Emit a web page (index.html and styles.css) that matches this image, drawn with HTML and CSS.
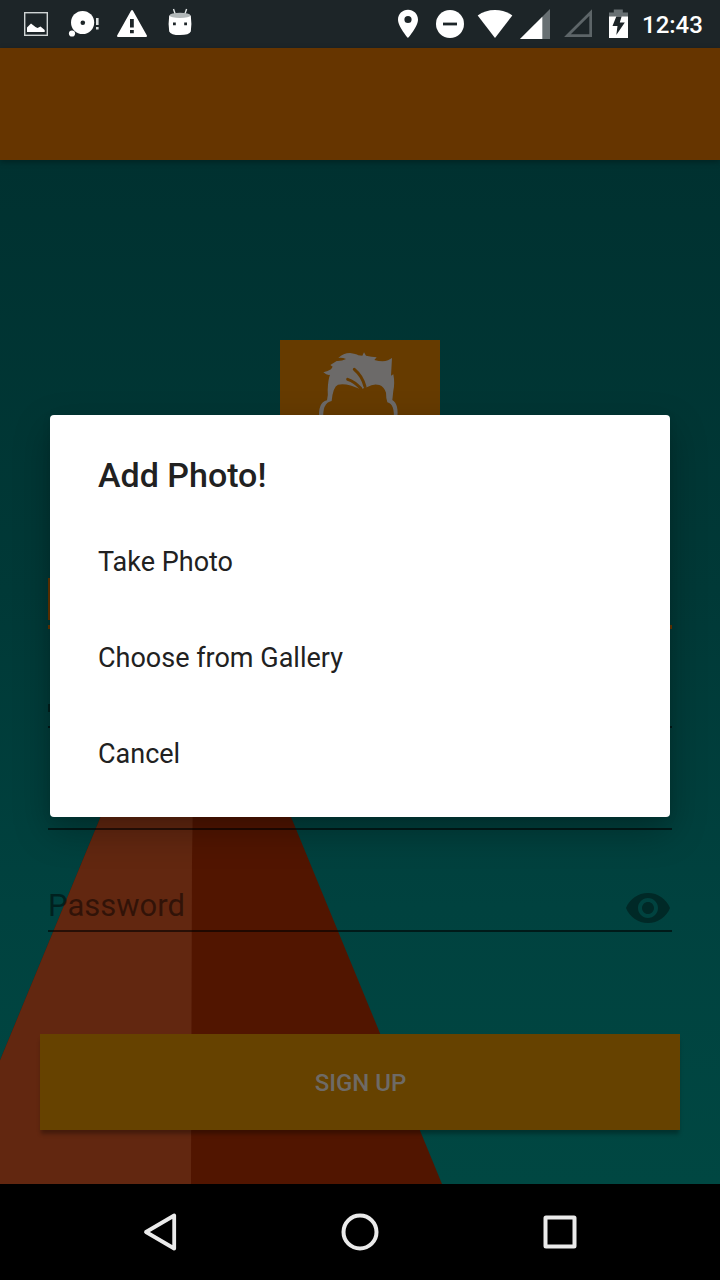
FILE: index.html
```html
<!DOCTYPE html>
<html lang="en">
<head>
<meta charset="utf-8">
<title>Add Photo</title>
<link rel="stylesheet" href="styles.css">
</head>
<body>
<div class="phone">
  <header class="status">
    <div class="notifications">
      <svg width="48" height="48" viewBox="12 0 48 48"><rect x="24.7" y="12.7" width="22.6" height="22.6" fill="none" stroke="#cfd4d4" stroke-width="1.4"/><path d="M27 32v-4.500l4-4 4.500 3.500 2 1 3-1.500 4.200 3.500v2z" fill="#fff"/></svg>
      <svg width="48" height="48" viewBox="60 0 48 48"><circle cx="82.6" cy="22.5" r="11.6" fill="#fff"/><circle cx="82.8" cy="22.7" r="2.3" fill="#1d2528"/><circle cx="72" cy="33.5" r="3.1" fill="#fff"/><path d="M96 18h2.600v7H96zM96 27h2.600v2.600H96z" fill="#dde1e1"/></svg>
      <svg width="48" height="48" viewBox="108 0 48 48"><path d="M132 11L118 36h28z" fill="#fff" stroke="#fff" stroke-width="2" stroke-linejoin="round"/><path d="M130 19h3.800v8.500H130zM130 30h3.800v3.200H130z" fill="#1d2528"/></svg>
      <svg width="48" height="48" viewBox="156 0 48 48"><path d="M173.500 9l1.700 5M186.600 9l-1.700 5" stroke="#e2e6e6" stroke-width="1.400"/><path d="M169.200 15.500h21.600q1.200 9 0 16-1.500 3.600-10.800 3.600t-10.800-3.600q-1.200-7 0-16z" fill="#fff"/><ellipse cx="180" cy="15.400" rx="10.400" ry="2.600" fill="#b2b8b9"/><path d="M173 22.500h2.800v2.800H173zM184.200 22.500h2.800v2.800h-2.800z" fill="#1d2528"/></svg>
    </div>
    <div class="system">
      <svg width="20" height="48" viewBox="398 0 20 48"><path d="M408 9.800c-5.600 0-10 4.300-10 9.700 0 7.400 10 18.500 10 18.500s10-11.100 10-18.500c0-5.400-4.400-9.700-10-9.700zm0 13.300a3.600 3.600 0 1 1 0-7.200 3.600 3.600 0 0 1 0 7.200z" fill="#fff"/></svg>
      <svg class="dnd" width="28" height="48" viewBox="436 0 28 48"><circle cx="450" cy="24" r="14" fill="#fff"/><path d="M443 22.600h14v2.800h-14z" fill="#1d2528"/></svg>
      <svg class="wifi" width="36" height="48" viewBox="477 0 36 48"><path d="M495 38L477.700 15.500Q485 10 495 10t17.300 5.500z" fill="#fff"/></svg>
      <svg class="signal" width="30" height="48" viewBox="520 0 30 48"><path d="M520 39l30-30v30z" fill="#687073"/><path d="M520 39l22.300-22.300V39z" fill="#fff"/></svg>
      <svg class="signal-empty" width="28" height="48" viewBox="564 0 28 48"><path d="M567.500 35.600L590.700 12.500v23.100z" fill="none" stroke="#5d6568" stroke-width="2.800"/></svg>
      <svg class="battery" width="19" height="48" viewBox="609 0 19 48"><path d="M609 12.500h4.800V9.500h9v3h5.200v5h-19z" fill="#687073"/><path d="M609 16.500h19V38h-19z" fill="#fff"/><path d="M616.300 16.500h5.300l-1.800 6h5l-8.500 12.500 1.200-9h-5z" fill="#1d2528"/></svg>
      <span class="clock">12:43</span>
    </div>
  </header>
  <div class="appbar"></div>
  <main class="page">
    <svg class="mountain" width="720" height="1024" viewBox="0 160 720 1024">
      <path d="M196 586L442 1184H-51z" fill="#511500"/>
      <path d="M196 586L-51 1184h242l1-320z" fill="#622710"/>
    </svg>
    <svg class="avatar" width="160" height="160" viewBox="60 60 480 480">
      <path d="M60 60h480v480H60z" fill="#663b00"/>
      <path d="M178 300Q172 248 201 241Q205 225 203 210Q204 180 210 164Q202 167 190 157Q204 154 213 148L218 140L211 135L230 123Q245 124 258 117Q246 112 235 114Q250 99 270 99Q288 101 295 106L307 107L312 97L318 107Q335 110 350 112L343 120Q368 127 384 121L396 114L393 167L400 163Q405 190 400 212L397 240Q418 252 411 300H401Q405 252 382 247Q378 236 378 218Q372 200 358 195Q340 190 322 201L302 208Q260 188 234 194Q219 200 215 243Q186 248 190 300z" fill="#6c6a69"/>
      <path d="M283 148Q307 168 315 200M263 178Q284 185 302 205" fill="none" stroke="#663b00" stroke-width="9" stroke-linecap="round"/>
    </svg>
    <form class="form">
      <div class="field active"><i class="cursor"></i></div>
      <div class="field second"><i class="stroke"></i></div>
      <div class="field"></div>
      <div class="field password">
        <span>Password</span>
        <svg width="48" height="48" viewBox="0 0 24 24"><path d="M12 4.500C7 4.500 2.730 7.610 1 12c1.730 4.390 6 7.500 11 7.500s9.270-3.110 11-7.500c-1.730-4.390-6-7.500-11-7.500zM12 17c-2.760 0-5-2.240-5-5s2.240-5 5-5 5 2.240 5 5-2.240 5-5 5zm0-8c-1.660 0-3 1.340-3 3s1.340 3 3 3 3-1.340 3-3-1.340-3-3-3z" fill="#002927"/></svg>
      </div>
    </form>
    <button class="signup">SIGN UP</button>
  </main>
  <nav class="navbar">
    <svg width="48" height="48" viewBox="0 0 48 48"><path d="M38.200 7.500v33L10 24z" fill="none" stroke="#ebebeb" stroke-width="3.800" stroke-linejoin="round"/></svg>
    <svg width="48" height="48" viewBox="0 0 48 48"><circle cx="24" cy="24" r="16.500" fill="none" stroke="#ebebeb" stroke-width="4"/></svg>
    <svg width="48" height="48" viewBox="0 0 48 48"><rect x="9.500" y="9.500" width="29" height="29" rx=".5" fill="none" stroke="#ebebeb" stroke-width="4" stroke-linejoin="round"/></svg>
  </nav>
  <section class="dialog">
    <h1 class="dialog-title">Add Photo!</h1>
    <ul class="options">
      <li>Take Photo</li>
      <li>Choose from Gallery</li>
      <li>Cancel</li>
    </ul>
  </section>
</div>
</body>
</html>
```
FILE: styles.css
```css
* { box-sizing: border-box; }

body { margin: 0; background: #000; font-family: Roboto, sans-serif; }

svg { display: block; flex: none; }

.phone {
  position: relative;
  display: flex;
  flex-direction: column;
  width: 720px;
  height: 1280px;
  overflow: hidden;
}

.status {
  display: flex;
  justify-content: space-between;
  height: 48px;
  padding: 0 16px 0 12px;
  background: #1d2528;
}
.notifications, .system { display: flex; }
.dnd { margin-left: 18px; }
.wifi { margin-left: 13px; }
.signal { margin-left: 7px; }
.signal-empty { margin-left: 14px; }
.battery { margin-left: 17px; }
.clock {
  width: 62px;
  margin-left: 14px;
  color: #fff;
  font-size: 24px;
  font-weight: 500;
  line-height: 50px;
  white-space: nowrap;
}

.appbar {
  z-index: 1;
  height: 112px;
  background: #663500;
  box-shadow: 0 2px 6px rgba(0, 0, 0, .3);
}

.page {
  position: relative;
  display: flex;
  flex-direction: column;
  align-items: center;
  height: 1024px;
  padding-top: 180px;
  background: linear-gradient(#003130, #003937 42%, #00423f 73%, #004742);
}
.mountain { position: absolute; top: 0; left: 0; }
.avatar { position: relative; }

.form {
  position: relative;
  flex: none;
  width: 624px;
  margin-top: 26px;
}
.field { height: 102px; border-bottom: 2px solid rgba(0, 0, 0, .6); }
.active {
  height: 103px;
  padding-top: 52px;
  border-bottom: 4px solid #663500;
}
.second { height: 99px; padding-top: 75px; }
.cursor {
  display: block;
  width: 3px;
  height: 42px;
  background: #663500;
}
.stroke {
  display: block;
  width: 2px;
  height: 8px;
  background: #00201e;
}
.password {
  display: flex;
  justify-content: space-between;
  align-items: flex-end;
  color: rgba(0, 0, 0, .5);
  font-size: 31px;
  line-height: 38px;
}
.password span { padding-bottom: 5px; }
.password svg { margin-bottom: -2px; }

.signup {
  position: relative;
  flex: none;
  width: 640px;
  height: 96px;
  margin-top: 102px;
  padding: 2px 0 0 1px;
  border: 0;
  background: #664200;
  box-shadow: 0 5px 4px -1px rgba(0, 0, 0, .3);
  color: #6e6a66;
  font: 500 24px Roboto, sans-serif;
}

.navbar {
  display: flex;
  justify-content: center;
  align-items: center;
  gap: 152px;
  height: 96px;
  background: #000;
}

.dialog {
  position: absolute;
  z-index: 2;
  top: 415px;
  left: 50px;
  width: 620px;
  height: 402px;
  padding: 36px 48px 0;
  border-radius: 4px;
  background: #fff;
  box-shadow: 0 14px 36px rgba(0, 0, 0, .28), 0 2px 8px rgba(0, 0, 0, .08);
  color: #212121;
}
.dialog-title {
  margin: 0;
  font-size: 34px;
  font-weight: 500;
  line-height: 48px;
}
.options {
  margin: 15px 0 0;
  padding: 0;
  list-style: none;
  font-size: 27px;
  line-height: 96px;
}
```
